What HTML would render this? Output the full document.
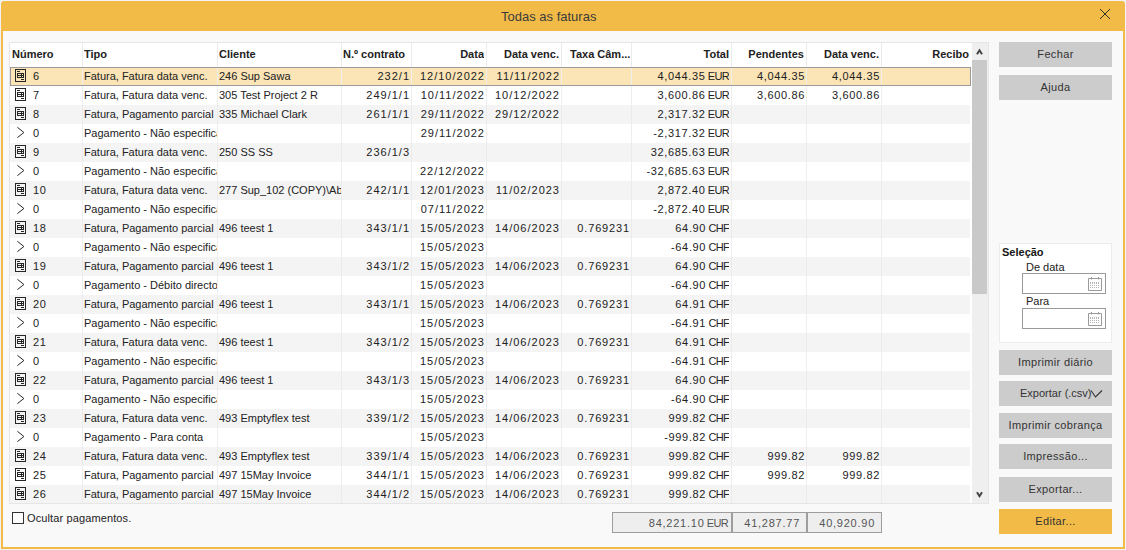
<!DOCTYPE html>
<html><head><meta charset="utf-8"><style>
*{margin:0;padding:0;box-sizing:border-box}
html,body{width:1126px;height:550px;overflow:hidden;background:#f3f3f3;font-family:"Liberation Sans",sans-serif;}
.win{position:absolute;left:1px;top:1px;width:1124px;height:548px;background:#f2bb48;border-radius:3px 3px 0 0;}
.title{position:absolute;left:501px;top:9px;font-size:13px;color:#3b3b3b;line-height:16px;white-space:nowrap}
.close{position:absolute;left:1099px;top:8px}
.content{position:absolute;left:3px;top:31px;width:1120px;height:516px;background:#f9f9f9;}
.tbl{position:absolute;left:9px;top:42px;width:980px;height:462px;background:#fff;border:1px solid #e6e6e6;overflow:hidden}
.hdr{position:absolute;left:0;top:0;width:961px;height:24px;background:#fff}
.hc{position:absolute;top:-1px;height:24px;line-height:24px;font-size:11px;font-weight:bold;color:#222;white-space:nowrap;overflow:hidden}
.hvs{position:absolute;top:0;width:1px;height:24px;background:#ebebeb}
.r{text-align:right}
.body{position:absolute;left:0;top:0;width:961px;height:460px;}
.row{position:absolute;left:0;width:960px;height:19px;background:#fff}
.row.alt{background:#f4f4f4}
.row.sel{background:#fbe4b6}
.vs{position:absolute;top:0;width:1px;height:19px;background:#eeeeee}
.row.alt .vs{background:#ebebeb}
.c{position:absolute;top:0;height:19px;line-height:19px;font-size:11px;color:#222;white-space:nowrap;overflow:hidden}
.ct{letter-spacing:1.0px}
.dt{letter-spacing:1.0px}
.tx{letter-spacing:0.85px}
.am{letter-spacing:0.65px}
.cur{letter-spacing:-0.7px}
.ic{position:absolute;left:0;top:0}
.selb{position:absolute;left:0;top:0;width:961px;height:19px;border:1px solid #9a9a9a;pointer-events:none}
.sb{position:absolute;left:962px;top:0;width:16px;height:460px;background:#efefef}
.thumb{position:absolute;left:0;top:17px;width:15px;height:234px;background:#c9c9c9}
.btn{position:absolute;left:999px;width:113px;height:25px;background:#cccccc;font-size:11px;color:#333;text-align:center;line-height:25px;white-space:nowrap;letter-spacing:0.35px}
.btn.pri{background:#f2bb48}
.sel-panel{position:absolute;left:999px;top:243px;width:113px;height:100px;background:#fff;border:1px solid #ececec}
.lbl{position:absolute;font-size:11px;color:#222;white-space:nowrap;line-height:13px}
.inp{position:absolute;left:1022px;width:84px;height:21px;border:1px solid #999;background:#fff}
.tot{position:absolute;top:512px;height:21px;background:#eeeeee;border:1px solid #9d9d9d;font-size:11px;color:#555;text-align:right;line-height:20px;padding-right:4px;letter-spacing:0.75px}
.cb{position:absolute;left:12px;top:512px;width:12px;height:12px;border:1px solid #333;background:#fff}
</style></head><body>
<div class="win"></div>
<div class="title">Todas as faturas</div>
<svg class="close" width="12" height="12" viewBox="0 0 12 12"><path d="M1 1L11 11M11 1L1 11" stroke="#2e2e2e" stroke-width="1"/></svg>
<div class="content"></div>
<div class="tbl">
 <div class="hdr"><div class="hvs" style="left:72px"></div><div class="hvs" style="left:207px"></div><div class="hvs" style="left:331px"></div><div class="hvs" style="left:401px"></div><div class="hvs" style="left:476px"></div><div class="hvs" style="left:551px"></div><div class="hvs" style="left:621px"></div><div class="hvs" style="left:721px"></div><div class="hvs" style="left:796px"></div><div class="hvs" style="left:871px"></div><div class="hc" style="left:2px;width:70px">Número</div><div class="hc" style="left:74px;width:133px">Tipo</div><div class="hc" style="left:209px;width:122px">Cliente</div><div class="hc" style="left:333px;width:68px">N.º contrato</div><div class="hc r" style="left:401px;width:73px">Data</div><div class="hc r" style="left:476px;width:73px">Data venc.</div><div class="hc" style="left:560px;width:61px">Taxa Câm...</div><div class="hc r" style="left:621px;width:98px">Total</div><div class="hc r" style="left:721px;width:73px">Pendentes</div><div class="hc r" style="left:796px;width:73px">Data venc.</div><div class="hc r" style="left:871px;width:88px">Recibo</div></div>
 <div class="body"><div class="row sel" style="top:24px"><div class="vs" style="left:72px"></div><div class="vs" style="left:207px"></div><div class="vs" style="left:331px"></div><div class="vs" style="left:401px"></div><div class="vs" style="left:476px"></div><div class="vs" style="left:551px"></div><div class="vs" style="left:621px"></div><div class="vs" style="left:721px"></div><div class="vs" style="left:796px"></div><div class="vs" style="left:871px"></div><svg class="ic" width="30" height="19" viewBox="0 0 30 19" shape-rendering="crispEdges"><path d="M5.5 2.5h10v12h-10z M7 4.5h3 M7.5 6.5h6v4h-6z M7 8.5h7 M11.5 6v5 M11 12.5h3" fill="none" stroke="#262626" stroke-width="1"/></svg><div class="c num" style="left:23px;letter-spacing:0.6px">6</div><div class="c " style="left:74px;width:133px">Fatura, Fatura data venc.</div><div class="c " style="left:209px;width:122px">246 Sup Sawa</div><div class="c r ct" style="left:331px;width:69px">232/1</div><div class="c r dt" style="left:401px;width:74px">12/10/2022</div><div class="c r dt" style="left:476px;width:74px">11/11/2022</div><div class="c r am" style="left:621px;width:98px">4,044.35<span class="cur"> EUR</span></div><div class="c r am" style="left:721px;width:74px">4,044.35</div><div class="c r am" style="left:796px;width:74px">4,044.35</div><div class="selb"></div></div><div class="row" style="top:43px"><div class="vs" style="left:72px"></div><div class="vs" style="left:207px"></div><div class="vs" style="left:331px"></div><div class="vs" style="left:401px"></div><div class="vs" style="left:476px"></div><div class="vs" style="left:551px"></div><div class="vs" style="left:621px"></div><div class="vs" style="left:721px"></div><div class="vs" style="left:796px"></div><div class="vs" style="left:871px"></div><svg class="ic" width="30" height="19" viewBox="0 0 30 19" shape-rendering="crispEdges"><path d="M5.5 2.5h10v12h-10z M7 4.5h3 M7.5 6.5h6v4h-6z M7 8.5h7 M11.5 6v5 M11 12.5h3" fill="none" stroke="#262626" stroke-width="1"/></svg><div class="c num" style="left:23px;letter-spacing:0.6px">7</div><div class="c " style="left:74px;width:133px">Fatura, Fatura data venc.</div><div class="c " style="left:209px;width:122px">305 Test Project 2 R</div><div class="c r ct" style="left:331px;width:69px">249/1/1</div><div class="c r dt" style="left:401px;width:74px">10/11/2022</div><div class="c r dt" style="left:476px;width:74px">10/12/2022</div><div class="c r am" style="left:621px;width:98px">3,600.86<span class="cur"> EUR</span></div><div class="c r am" style="left:721px;width:74px">3,600.86</div><div class="c r am" style="left:796px;width:74px">3,600.86</div></div><div class="row alt" style="top:62px"><div class="vs" style="left:72px"></div><div class="vs" style="left:207px"></div><div class="vs" style="left:331px"></div><div class="vs" style="left:401px"></div><div class="vs" style="left:476px"></div><div class="vs" style="left:551px"></div><div class="vs" style="left:621px"></div><div class="vs" style="left:721px"></div><div class="vs" style="left:796px"></div><div class="vs" style="left:871px"></div><svg class="ic" width="30" height="19" viewBox="0 0 30 19" shape-rendering="crispEdges"><path d="M5.5 2.5h10v12h-10z M7 4.5h3 M7.5 6.5h6v4h-6z M7 8.5h7 M11.5 6v5 M11 12.5h3" fill="none" stroke="#262626" stroke-width="1"/></svg><div class="c num" style="left:23px;letter-spacing:0.6px">8</div><div class="c " style="left:74px;width:133px">Fatura, Pagamento parcial</div><div class="c " style="left:209px;width:122px">335 Michael Clark</div><div class="c r ct" style="left:331px;width:69px">261/1/1</div><div class="c r dt" style="left:401px;width:74px">29/11/2022</div><div class="c r dt" style="left:476px;width:74px">29/12/2022</div><div class="c r am" style="left:621px;width:98px">2,317.32<span class="cur"> EUR</span></div></div><div class="row" style="top:81px"><div class="vs" style="left:72px"></div><div class="vs" style="left:207px"></div><div class="vs" style="left:331px"></div><div class="vs" style="left:401px"></div><div class="vs" style="left:476px"></div><div class="vs" style="left:551px"></div><div class="vs" style="left:621px"></div><div class="vs" style="left:721px"></div><div class="vs" style="left:796px"></div><div class="vs" style="left:871px"></div><svg class="ic" width="30" height="19" viewBox="0 0 30 19"><path d="M7.4 3.3L13.9 8.5 7.4 13.6" fill="none" stroke="#262626" stroke-width="1"/></svg><div class="c num" style="left:23px;letter-spacing:0.6px">0</div><div class="c " style="left:74px;width:133px">Pagamento - Não especificado</div><div class="c r dt" style="left:401px;width:74px">29/11/2022</div><div class="c r am" style="left:621px;width:98px">-2,317.32<span class="cur"> EUR</span></div></div><div class="row alt" style="top:100px"><div class="vs" style="left:72px"></div><div class="vs" style="left:207px"></div><div class="vs" style="left:331px"></div><div class="vs" style="left:401px"></div><div class="vs" style="left:476px"></div><div class="vs" style="left:551px"></div><div class="vs" style="left:621px"></div><div class="vs" style="left:721px"></div><div class="vs" style="left:796px"></div><div class="vs" style="left:871px"></div><svg class="ic" width="30" height="19" viewBox="0 0 30 19" shape-rendering="crispEdges"><path d="M5.5 2.5h10v12h-10z M7 4.5h3 M7.5 6.5h6v4h-6z M7 8.5h7 M11.5 6v5 M11 12.5h3" fill="none" stroke="#262626" stroke-width="1"/></svg><div class="c num" style="left:23px;letter-spacing:0.6px">9</div><div class="c " style="left:74px;width:133px">Fatura, Fatura data venc.</div><div class="c " style="left:209px;width:122px">250 SS SS</div><div class="c r ct" style="left:331px;width:69px">236/1/3</div><div class="c r am" style="left:621px;width:98px">32,685.63<span class="cur"> EUR</span></div></div><div class="row" style="top:119px"><div class="vs" style="left:72px"></div><div class="vs" style="left:207px"></div><div class="vs" style="left:331px"></div><div class="vs" style="left:401px"></div><div class="vs" style="left:476px"></div><div class="vs" style="left:551px"></div><div class="vs" style="left:621px"></div><div class="vs" style="left:721px"></div><div class="vs" style="left:796px"></div><div class="vs" style="left:871px"></div><svg class="ic" width="30" height="19" viewBox="0 0 30 19"><path d="M7.4 3.3L13.9 8.5 7.4 13.6" fill="none" stroke="#262626" stroke-width="1"/></svg><div class="c num" style="left:23px;letter-spacing:0.6px">0</div><div class="c " style="left:74px;width:133px">Pagamento - Não especificado</div><div class="c r dt" style="left:401px;width:74px">22/12/2022</div><div class="c r am" style="left:621px;width:98px">-32,685.63<span class="cur"> EUR</span></div></div><div class="row alt" style="top:138px"><div class="vs" style="left:72px"></div><div class="vs" style="left:207px"></div><div class="vs" style="left:331px"></div><div class="vs" style="left:401px"></div><div class="vs" style="left:476px"></div><div class="vs" style="left:551px"></div><div class="vs" style="left:621px"></div><div class="vs" style="left:721px"></div><div class="vs" style="left:796px"></div><div class="vs" style="left:871px"></div><svg class="ic" width="30" height="19" viewBox="0 0 30 19" shape-rendering="crispEdges"><path d="M5.5 2.5h10v12h-10z M7 4.5h3 M7.5 6.5h6v4h-6z M7 8.5h7 M11.5 6v5 M11 12.5h3" fill="none" stroke="#262626" stroke-width="1"/></svg><div class="c num" style="left:23px;letter-spacing:0.6px">10</div><div class="c " style="left:74px;width:133px">Fatura, Fatura data venc.</div><div class="c " style="left:209px;width:122px">277 Sup_102 (COPY)\Abc</div><div class="c r ct" style="left:331px;width:69px">242/1/1</div><div class="c r dt" style="left:401px;width:74px">12/01/2023</div><div class="c r dt" style="left:476px;width:74px">11/02/2023</div><div class="c r am" style="left:621px;width:98px">2,872.40<span class="cur"> EUR</span></div></div><div class="row" style="top:157px"><div class="vs" style="left:72px"></div><div class="vs" style="left:207px"></div><div class="vs" style="left:331px"></div><div class="vs" style="left:401px"></div><div class="vs" style="left:476px"></div><div class="vs" style="left:551px"></div><div class="vs" style="left:621px"></div><div class="vs" style="left:721px"></div><div class="vs" style="left:796px"></div><div class="vs" style="left:871px"></div><svg class="ic" width="30" height="19" viewBox="0 0 30 19"><path d="M7.4 3.3L13.9 8.5 7.4 13.6" fill="none" stroke="#262626" stroke-width="1"/></svg><div class="c num" style="left:23px;letter-spacing:0.6px">0</div><div class="c " style="left:74px;width:133px">Pagamento - Não especificado</div><div class="c r dt" style="left:401px;width:74px">07/11/2022</div><div class="c r am" style="left:621px;width:98px">-2,872.40<span class="cur"> EUR</span></div></div><div class="row alt" style="top:176px"><div class="vs" style="left:72px"></div><div class="vs" style="left:207px"></div><div class="vs" style="left:331px"></div><div class="vs" style="left:401px"></div><div class="vs" style="left:476px"></div><div class="vs" style="left:551px"></div><div class="vs" style="left:621px"></div><div class="vs" style="left:721px"></div><div class="vs" style="left:796px"></div><div class="vs" style="left:871px"></div><svg class="ic" width="30" height="19" viewBox="0 0 30 19" shape-rendering="crispEdges"><path d="M5.5 2.5h10v12h-10z M7 4.5h3 M7.5 6.5h6v4h-6z M7 8.5h7 M11.5 6v5 M11 12.5h3" fill="none" stroke="#262626" stroke-width="1"/></svg><div class="c num" style="left:23px;letter-spacing:0.6px">18</div><div class="c " style="left:74px;width:133px">Fatura, Pagamento parcial</div><div class="c " style="left:209px;width:122px">496 teest 1</div><div class="c r ct" style="left:331px;width:69px">343/1/1</div><div class="c r dt" style="left:401px;width:74px">15/05/2023</div><div class="c r dt" style="left:476px;width:74px">14/06/2023</div><div class="c r tx" style="left:551px;width:69px">0.769231</div><div class="c r am" style="left:621px;width:98px">64.90<span class="cur"> CHF</span></div></div><div class="row" style="top:195px"><div class="vs" style="left:72px"></div><div class="vs" style="left:207px"></div><div class="vs" style="left:331px"></div><div class="vs" style="left:401px"></div><div class="vs" style="left:476px"></div><div class="vs" style="left:551px"></div><div class="vs" style="left:621px"></div><div class="vs" style="left:721px"></div><div class="vs" style="left:796px"></div><div class="vs" style="left:871px"></div><svg class="ic" width="30" height="19" viewBox="0 0 30 19"><path d="M7.4 3.3L13.9 8.5 7.4 13.6" fill="none" stroke="#262626" stroke-width="1"/></svg><div class="c num" style="left:23px;letter-spacing:0.6px">0</div><div class="c " style="left:74px;width:133px">Pagamento - Não especificado</div><div class="c r dt" style="left:401px;width:74px">15/05/2023</div><div class="c r am" style="left:621px;width:98px">-64.90<span class="cur"> CHF</span></div></div><div class="row alt" style="top:214px"><div class="vs" style="left:72px"></div><div class="vs" style="left:207px"></div><div class="vs" style="left:331px"></div><div class="vs" style="left:401px"></div><div class="vs" style="left:476px"></div><div class="vs" style="left:551px"></div><div class="vs" style="left:621px"></div><div class="vs" style="left:721px"></div><div class="vs" style="left:796px"></div><div class="vs" style="left:871px"></div><svg class="ic" width="30" height="19" viewBox="0 0 30 19" shape-rendering="crispEdges"><path d="M5.5 2.5h10v12h-10z M7 4.5h3 M7.5 6.5h6v4h-6z M7 8.5h7 M11.5 6v5 M11 12.5h3" fill="none" stroke="#262626" stroke-width="1"/></svg><div class="c num" style="left:23px;letter-spacing:0.6px">19</div><div class="c " style="left:74px;width:133px">Fatura, Pagamento parcial</div><div class="c " style="left:209px;width:122px">496 teest 1</div><div class="c r ct" style="left:331px;width:69px">343/1/2</div><div class="c r dt" style="left:401px;width:74px">15/05/2023</div><div class="c r dt" style="left:476px;width:74px">14/06/2023</div><div class="c r tx" style="left:551px;width:69px">0.769231</div><div class="c r am" style="left:621px;width:98px">64.90<span class="cur"> CHF</span></div></div><div class="row" style="top:233px"><div class="vs" style="left:72px"></div><div class="vs" style="left:207px"></div><div class="vs" style="left:331px"></div><div class="vs" style="left:401px"></div><div class="vs" style="left:476px"></div><div class="vs" style="left:551px"></div><div class="vs" style="left:621px"></div><div class="vs" style="left:721px"></div><div class="vs" style="left:796px"></div><div class="vs" style="left:871px"></div><svg class="ic" width="30" height="19" viewBox="0 0 30 19"><path d="M7.4 3.3L13.9 8.5 7.4 13.6" fill="none" stroke="#262626" stroke-width="1"/></svg><div class="c num" style="left:23px;letter-spacing:0.6px">0</div><div class="c " style="left:74px;width:133px">Pagamento - Débito directo</div><div class="c r dt" style="left:401px;width:74px">15/05/2023</div><div class="c r am" style="left:621px;width:98px">-64.90<span class="cur"> CHF</span></div></div><div class="row alt" style="top:252px"><div class="vs" style="left:72px"></div><div class="vs" style="left:207px"></div><div class="vs" style="left:331px"></div><div class="vs" style="left:401px"></div><div class="vs" style="left:476px"></div><div class="vs" style="left:551px"></div><div class="vs" style="left:621px"></div><div class="vs" style="left:721px"></div><div class="vs" style="left:796px"></div><div class="vs" style="left:871px"></div><svg class="ic" width="30" height="19" viewBox="0 0 30 19" shape-rendering="crispEdges"><path d="M5.5 2.5h10v12h-10z M7 4.5h3 M7.5 6.5h6v4h-6z M7 8.5h7 M11.5 6v5 M11 12.5h3" fill="none" stroke="#262626" stroke-width="1"/></svg><div class="c num" style="left:23px;letter-spacing:0.6px">20</div><div class="c " style="left:74px;width:133px">Fatura, Pagamento parcial</div><div class="c " style="left:209px;width:122px">496 teest 1</div><div class="c r ct" style="left:331px;width:69px">343/1/1</div><div class="c r dt" style="left:401px;width:74px">15/05/2023</div><div class="c r dt" style="left:476px;width:74px">14/06/2023</div><div class="c r tx" style="left:551px;width:69px">0.769231</div><div class="c r am" style="left:621px;width:98px">64.91<span class="cur"> CHF</span></div></div><div class="row" style="top:271px"><div class="vs" style="left:72px"></div><div class="vs" style="left:207px"></div><div class="vs" style="left:331px"></div><div class="vs" style="left:401px"></div><div class="vs" style="left:476px"></div><div class="vs" style="left:551px"></div><div class="vs" style="left:621px"></div><div class="vs" style="left:721px"></div><div class="vs" style="left:796px"></div><div class="vs" style="left:871px"></div><svg class="ic" width="30" height="19" viewBox="0 0 30 19"><path d="M7.4 3.3L13.9 8.5 7.4 13.6" fill="none" stroke="#262626" stroke-width="1"/></svg><div class="c num" style="left:23px;letter-spacing:0.6px">0</div><div class="c " style="left:74px;width:133px">Pagamento - Não especificado</div><div class="c r dt" style="left:401px;width:74px">15/05/2023</div><div class="c r am" style="left:621px;width:98px">-64.91<span class="cur"> CHF</span></div></div><div class="row alt" style="top:290px"><div class="vs" style="left:72px"></div><div class="vs" style="left:207px"></div><div class="vs" style="left:331px"></div><div class="vs" style="left:401px"></div><div class="vs" style="left:476px"></div><div class="vs" style="left:551px"></div><div class="vs" style="left:621px"></div><div class="vs" style="left:721px"></div><div class="vs" style="left:796px"></div><div class="vs" style="left:871px"></div><svg class="ic" width="30" height="19" viewBox="0 0 30 19" shape-rendering="crispEdges"><path d="M5.5 2.5h10v12h-10z M7 4.5h3 M7.5 6.5h6v4h-6z M7 8.5h7 M11.5 6v5 M11 12.5h3" fill="none" stroke="#262626" stroke-width="1"/></svg><div class="c num" style="left:23px;letter-spacing:0.6px">21</div><div class="c " style="left:74px;width:133px">Fatura, Fatura data venc.</div><div class="c " style="left:209px;width:122px">496 teest 1</div><div class="c r ct" style="left:331px;width:69px">343/1/2</div><div class="c r dt" style="left:401px;width:74px">15/05/2023</div><div class="c r dt" style="left:476px;width:74px">14/06/2023</div><div class="c r tx" style="left:551px;width:69px">0.769231</div><div class="c r am" style="left:621px;width:98px">64.91<span class="cur"> CHF</span></div></div><div class="row" style="top:309px"><div class="vs" style="left:72px"></div><div class="vs" style="left:207px"></div><div class="vs" style="left:331px"></div><div class="vs" style="left:401px"></div><div class="vs" style="left:476px"></div><div class="vs" style="left:551px"></div><div class="vs" style="left:621px"></div><div class="vs" style="left:721px"></div><div class="vs" style="left:796px"></div><div class="vs" style="left:871px"></div><svg class="ic" width="30" height="19" viewBox="0 0 30 19"><path d="M7.4 3.3L13.9 8.5 7.4 13.6" fill="none" stroke="#262626" stroke-width="1"/></svg><div class="c num" style="left:23px;letter-spacing:0.6px">0</div><div class="c " style="left:74px;width:133px">Pagamento - Não especificado</div><div class="c r dt" style="left:401px;width:74px">15/05/2023</div><div class="c r am" style="left:621px;width:98px">-64.91<span class="cur"> CHF</span></div></div><div class="row alt" style="top:328px"><div class="vs" style="left:72px"></div><div class="vs" style="left:207px"></div><div class="vs" style="left:331px"></div><div class="vs" style="left:401px"></div><div class="vs" style="left:476px"></div><div class="vs" style="left:551px"></div><div class="vs" style="left:621px"></div><div class="vs" style="left:721px"></div><div class="vs" style="left:796px"></div><div class="vs" style="left:871px"></div><svg class="ic" width="30" height="19" viewBox="0 0 30 19" shape-rendering="crispEdges"><path d="M5.5 2.5h10v12h-10z M7 4.5h3 M7.5 6.5h6v4h-6z M7 8.5h7 M11.5 6v5 M11 12.5h3" fill="none" stroke="#262626" stroke-width="1"/></svg><div class="c num" style="left:23px;letter-spacing:0.6px">22</div><div class="c " style="left:74px;width:133px">Fatura, Pagamento parcial</div><div class="c " style="left:209px;width:122px">496 teest 1</div><div class="c r ct" style="left:331px;width:69px">343/1/3</div><div class="c r dt" style="left:401px;width:74px">15/05/2023</div><div class="c r dt" style="left:476px;width:74px">14/06/2023</div><div class="c r tx" style="left:551px;width:69px">0.769231</div><div class="c r am" style="left:621px;width:98px">64.90<span class="cur"> CHF</span></div></div><div class="row" style="top:347px"><div class="vs" style="left:72px"></div><div class="vs" style="left:207px"></div><div class="vs" style="left:331px"></div><div class="vs" style="left:401px"></div><div class="vs" style="left:476px"></div><div class="vs" style="left:551px"></div><div class="vs" style="left:621px"></div><div class="vs" style="left:721px"></div><div class="vs" style="left:796px"></div><div class="vs" style="left:871px"></div><svg class="ic" width="30" height="19" viewBox="0 0 30 19"><path d="M7.4 3.3L13.9 8.5 7.4 13.6" fill="none" stroke="#262626" stroke-width="1"/></svg><div class="c num" style="left:23px;letter-spacing:0.6px">0</div><div class="c " style="left:74px;width:133px">Pagamento - Não especificado</div><div class="c r dt" style="left:401px;width:74px">15/05/2023</div><div class="c r am" style="left:621px;width:98px">-64.90<span class="cur"> CHF</span></div></div><div class="row alt" style="top:366px"><div class="vs" style="left:72px"></div><div class="vs" style="left:207px"></div><div class="vs" style="left:331px"></div><div class="vs" style="left:401px"></div><div class="vs" style="left:476px"></div><div class="vs" style="left:551px"></div><div class="vs" style="left:621px"></div><div class="vs" style="left:721px"></div><div class="vs" style="left:796px"></div><div class="vs" style="left:871px"></div><svg class="ic" width="30" height="19" viewBox="0 0 30 19" shape-rendering="crispEdges"><path d="M5.5 2.5h10v12h-10z M7 4.5h3 M7.5 6.5h6v4h-6z M7 8.5h7 M11.5 6v5 M11 12.5h3" fill="none" stroke="#262626" stroke-width="1"/></svg><div class="c num" style="left:23px;letter-spacing:0.6px">23</div><div class="c " style="left:74px;width:133px">Fatura, Fatura data venc.</div><div class="c " style="left:209px;width:122px">493 Emptyflex test</div><div class="c r ct" style="left:331px;width:69px">339/1/2</div><div class="c r dt" style="left:401px;width:74px">15/05/2023</div><div class="c r dt" style="left:476px;width:74px">14/06/2023</div><div class="c r tx" style="left:551px;width:69px">0.769231</div><div class="c r am" style="left:621px;width:98px">999.82<span class="cur"> CHF</span></div></div><div class="row" style="top:385px"><div class="vs" style="left:72px"></div><div class="vs" style="left:207px"></div><div class="vs" style="left:331px"></div><div class="vs" style="left:401px"></div><div class="vs" style="left:476px"></div><div class="vs" style="left:551px"></div><div class="vs" style="left:621px"></div><div class="vs" style="left:721px"></div><div class="vs" style="left:796px"></div><div class="vs" style="left:871px"></div><svg class="ic" width="30" height="19" viewBox="0 0 30 19"><path d="M7.4 3.3L13.9 8.5 7.4 13.6" fill="none" stroke="#262626" stroke-width="1"/></svg><div class="c num" style="left:23px;letter-spacing:0.6px">0</div><div class="c " style="left:74px;width:133px">Pagamento - Para conta</div><div class="c r dt" style="left:401px;width:74px">15/05/2023</div><div class="c r am" style="left:621px;width:98px">-999.82<span class="cur"> CHF</span></div></div><div class="row alt" style="top:404px"><div class="vs" style="left:72px"></div><div class="vs" style="left:207px"></div><div class="vs" style="left:331px"></div><div class="vs" style="left:401px"></div><div class="vs" style="left:476px"></div><div class="vs" style="left:551px"></div><div class="vs" style="left:621px"></div><div class="vs" style="left:721px"></div><div class="vs" style="left:796px"></div><div class="vs" style="left:871px"></div><svg class="ic" width="30" height="19" viewBox="0 0 30 19" shape-rendering="crispEdges"><path d="M5.5 2.5h10v12h-10z M7 4.5h3 M7.5 6.5h6v4h-6z M7 8.5h7 M11.5 6v5 M11 12.5h3" fill="none" stroke="#262626" stroke-width="1"/></svg><div class="c num" style="left:23px;letter-spacing:0.6px">24</div><div class="c " style="left:74px;width:133px">Fatura, Fatura data venc.</div><div class="c " style="left:209px;width:122px">493 Emptyflex test</div><div class="c r ct" style="left:331px;width:69px">339/1/4</div><div class="c r dt" style="left:401px;width:74px">15/05/2023</div><div class="c r dt" style="left:476px;width:74px">14/06/2023</div><div class="c r tx" style="left:551px;width:69px">0.769231</div><div class="c r am" style="left:621px;width:98px">999.82<span class="cur"> CHF</span></div><div class="c r am" style="left:721px;width:74px">999.82</div><div class="c r am" style="left:796px;width:74px">999.82</div></div><div class="row" style="top:423px"><div class="vs" style="left:72px"></div><div class="vs" style="left:207px"></div><div class="vs" style="left:331px"></div><div class="vs" style="left:401px"></div><div class="vs" style="left:476px"></div><div class="vs" style="left:551px"></div><div class="vs" style="left:621px"></div><div class="vs" style="left:721px"></div><div class="vs" style="left:796px"></div><div class="vs" style="left:871px"></div><svg class="ic" width="30" height="19" viewBox="0 0 30 19" shape-rendering="crispEdges"><path d="M5.5 2.5h10v12h-10z M7 4.5h3 M7.5 6.5h6v4h-6z M7 8.5h7 M11.5 6v5 M11 12.5h3" fill="none" stroke="#262626" stroke-width="1"/></svg><div class="c num" style="left:23px;letter-spacing:0.6px">25</div><div class="c " style="left:74px;width:133px">Fatura, Pagamento parcial</div><div class="c " style="left:209px;width:122px">497 15May Invoice</div><div class="c r ct" style="left:331px;width:69px">344/1/1</div><div class="c r dt" style="left:401px;width:74px">15/05/2023</div><div class="c r dt" style="left:476px;width:74px">14/06/2023</div><div class="c r tx" style="left:551px;width:69px">0.769231</div><div class="c r am" style="left:621px;width:98px">999.82<span class="cur"> CHF</span></div><div class="c r am" style="left:721px;width:74px">999.82</div><div class="c r am" style="left:796px;width:74px">999.82</div></div><div class="row alt" style="top:442px"><div class="vs" style="left:72px"></div><div class="vs" style="left:207px"></div><div class="vs" style="left:331px"></div><div class="vs" style="left:401px"></div><div class="vs" style="left:476px"></div><div class="vs" style="left:551px"></div><div class="vs" style="left:621px"></div><div class="vs" style="left:721px"></div><div class="vs" style="left:796px"></div><div class="vs" style="left:871px"></div><svg class="ic" width="30" height="19" viewBox="0 0 30 19" shape-rendering="crispEdges"><path d="M5.5 2.5h10v12h-10z M7 4.5h3 M7.5 6.5h6v4h-6z M7 8.5h7 M11.5 6v5 M11 12.5h3" fill="none" stroke="#262626" stroke-width="1"/></svg><div class="c num" style="left:23px;letter-spacing:0.6px">26</div><div class="c " style="left:74px;width:133px">Fatura, Pagamento parcial</div><div class="c " style="left:209px;width:122px">497 15May Invoice</div><div class="c r ct" style="left:331px;width:69px">344/1/2</div><div class="c r dt" style="left:401px;width:74px">15/05/2023</div><div class="c r dt" style="left:476px;width:74px">14/06/2023</div><div class="c r tx" style="left:551px;width:69px">0.769231</div><div class="c r am" style="left:621px;width:98px">999.82<span class="cur"> CHF</span></div></div></div>
 <div class="sb"><svg width="16" height="16" style="position:absolute;left:0;top:0"><path d="M5 11.3L7.5 7.3 10 11.3" fill="none" stroke="#444" stroke-width="2"/></svg><div class="thumb"></div><svg width="16" height="16" style="position:absolute;left:0;top:444px"><path d="M5 5.2L7.5 9.2 10 5.2" fill="none" stroke="#444" stroke-width="2"/></svg></div>
</div>
<div class="cb"></div>
<div class="lbl" style="left:27px;top:512px;letter-spacing:0.12px">Ocultar pagamentos.</div>
<div class="tot" style="left:612px;width:120px;padding-right:3px">84,221.10<span class="cur"> EUR</span></div>
<div class="tot" style="left:732px;width:75px;padding-right:6px">41,287.77</div>
<div class="tot" style="left:807px;width:75px;padding-right:6px">40,920.90</div>

<div class="btn" style="top:42px">Fechar</div>
<div class="btn" style="top:75px">Ajuda</div>
<div class="sel-panel"></div>
<div class="lbl" style="left:1002px;top:246px;font-weight:bold;color:#161616">Seleção</div>
<div class="lbl" style="left:1026px;top:261px">De data</div>
<div class="inp" style="top:273px"><svg width="84" height="21" viewBox="0 0 84 21" style="position:absolute;left:0;top:0"><path d="M65.5 4.5h13v12h-13z M68.5 3v2.5 M75.5 3v2.5" fill="none" stroke="#9a9a9a"/><path d="M67 9h10" stroke="#b5b5b5" stroke-width="2" stroke-dasharray="1 1"/><path d="M67 11.5h10 M67 13.5h10" stroke="#b5b5b5" stroke-dasharray="1 1"/></svg></div>
<div class="lbl" style="left:1026px;top:295px">Para</div>
<div class="inp" style="top:308px"><svg width="84" height="21" viewBox="0 0 84 21" style="position:absolute;left:0;top:0"><path d="M65.5 4.5h13v12h-13z M68.5 3v2.5 M75.5 3v2.5" fill="none" stroke="#9a9a9a"/><path d="M67 9h10" stroke="#b5b5b5" stroke-width="2" stroke-dasharray="1 1"/><path d="M67 11.5h10 M67 13.5h10" stroke="#b5b5b5" stroke-dasharray="1 1"/></svg></div>
<div class="btn" style="top:350px">Imprimir diário</div>
<div class="btn" style="top:381px;letter-spacing:0;text-align:left;padding-left:21px">Exportar (.csv)<svg width="14" height="10" style="position:absolute;left:91px;top:8px"><path d="M1 1.5L5.5 8 12 1.5" fill="none" stroke="#333" stroke-width="1.1"/></svg></div>
<div class="btn" style="top:413px">Imprimir cobrança</div>
<div class="btn" style="top:444px">Impressão...</div>
<div class="btn" style="top:477px">Exportar...</div>
<div class="btn pri" style="top:509px">Editar...</div>
</body></html>
